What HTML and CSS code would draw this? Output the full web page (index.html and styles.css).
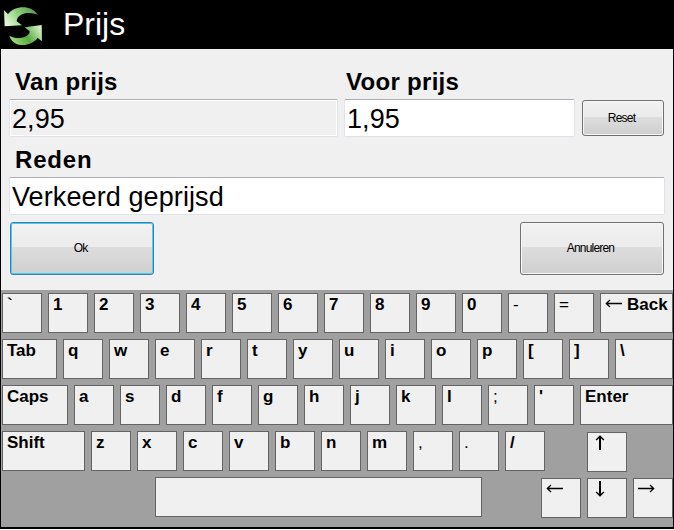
FILE: index.html
```
<!DOCTYPE html>
<html lang="nl">
<head>
    <meta charset="UTF-8">
    <meta name="viewport" content="width=device-width, initial-scale=1.0">
    <title>Prijs</title>
    <link rel="stylesheet" href="styles.css">
</head>
<body>
    <svg class="defs" width="0" height="0">
        <symbol id="arrow-left" viewBox="0 0 17 9">
            <path d="M1 4.5H17M5 1L1.3 4.5L5 8" fill="none" stroke="#000" stroke-width="1.3"/>
        </symbol>
        <symbol id="arrow-right" viewBox="0 0 17 9">
            <path d="M0 4.5H16M12 1L15.7 4.5L12 8" fill="none" stroke="#000" stroke-width="1.3"/>
        </symbol>
        <symbol id="arrow-up" viewBox="0 0 10 16">
            <path d="M5 1V15" fill="none" stroke="#000" stroke-width="2"/>
            <path d="M1.2 5L5 1.2L8.8 5" fill="none" stroke="#000" stroke-width="1.5"/>
        </symbol>
        <symbol id="arrow-down" viewBox="0 0 10 16">
            <path d="M5 0V15" fill="none" stroke="#000" stroke-width="2"/>
            <path d="M1.2 11L5 14.8L8.8 11" fill="none" stroke="#000" stroke-width="1.5"/>
        </symbol>
    </svg>

    <div class="window">
        <header>
            <svg class="logo" viewBox="9 18 120 120">
                <defs>
                    <linearGradient id="greenTop" x1="0" y1="0.6" x2="1" y2="0.2">
                        <stop offset="0" stop-color="#e2f5d8"/>
                        <stop offset="0.45" stop-color="#8fcf7c"/>
                        <stop offset="1" stop-color="#4d9a48"/>
                    </linearGradient>
                    <linearGradient id="greenBottom" x1="0" y1="0.7" x2="1" y2="0.3">
                        <stop offset="0" stop-color="#a4dc80"/>
                        <stop offset="0.5" stop-color="#55ab3c"/>
                        <stop offset="1" stop-color="#d3efc4"/>
                    </linearGradient>
                </defs>
                <path fill="url(#greenTop)" d="M12 31L24 42C38 25 60 19 82 23C97 26 108 34 113 45C99 38 80 37 66 43C56 48 50 55 50 64L66 76L14 79Z"/>
                <path fill="url(#greenBottom)" d="M126 124L113 114C99 131 78 138 57 134C42 131 32 120 28 107C42 115 61 116 74 111C84 107 89 101 89 94L74 82L125 75Z"/>
            </svg>
            <h1>Prijs</h1>
        </header>

        <form class="prijs-form">
            <div class="row">
                <div class="field van">
                    <label for="vanPrijs">Van prijs</label>
                    <input type="text" id="vanPrijs" value="2,95" readonly>
                </div>
                <div class="field voor">
                    <label for="voorPrijs">Voor prijs</label>
                    <input type="text" id="voorPrijs" value="1,95">
                </div>
                <button type="button" class="reset">Reset</button>
            </div>
            <div class="field reden">
                <label for="reden">Reden</label>
                <input type="text" id="reden" value="Verkeerd geprijsd">
            </div>
            <div class="buttons">
                <button type="button" class="ok">Ok</button>
                <button type="button">Annuleren</button>
            </div>
        </form>

        <div class="keyboard">
            <div class="keys">
                <div class="key">`</div>
                <div class="key">1</div>
                <div class="key">2</div>
                <div class="key">3</div>
                <div class="key">4</div>
                <div class="key">5</div>
                <div class="key">6</div>
                <div class="key">7</div>
                <div class="key">8</div>
                <div class="key">9</div>
                <div class="key">0</div>
                <div class="key thin">-</div>
                <div class="key thin">=</div>
                <div class="key wide back"><svg class="horizontal"><use href="#arrow-left"/></svg>Back</div>
            </div>
            <div class="keys">
                <div class="key tab">Tab</div>
                <div class="key">q</div>
                <div class="key">w</div>
                <div class="key">e</div>
                <div class="key">r</div>
                <div class="key">t</div>
                <div class="key">y</div>
                <div class="key">u</div>
                <div class="key">i</div>
                <div class="key">o</div>
                <div class="key">p</div>
                <div class="key">[</div>
                <div class="key">]</div>
                <div class="key wide">\</div>
            </div>
            <div class="keys">
                <div class="key caps">Caps</div>
                <div class="key">a</div>
                <div class="key">s</div>
                <div class="key">d</div>
                <div class="key">f</div>
                <div class="key">g</div>
                <div class="key">h</div>
                <div class="key">j</div>
                <div class="key">k</div>
                <div class="key">l</div>
                <div class="key thin">;</div>
                <div class="key">'</div>
                <div class="key wide">Enter</div>
            </div>
            <div class="keys">
                <div class="key shift">Shift</div>
                <div class="key">z</div>
                <div class="key">x</div>
                <div class="key">c</div>
                <div class="key">v</div>
                <div class="key">b</div>
                <div class="key">n</div>
                <div class="key">m</div>
                <div class="key thin">,</div>
                <div class="key thin">.</div>
                <div class="key">/</div>
                <div class="key arrow up"><svg class="vertical"><use href="#arrow-up"/></svg></div>
            </div>
            <div class="keys last">
                <div class="key space"></div>
                <div class="key arrow left"><svg class="horizontal"><use href="#arrow-left"/></svg></div>
                <div class="key arrow"><svg class="vertical"><use href="#arrow-down"/></svg></div>
                <div class="key arrow"><svg class="horizontal"><use href="#arrow-right"/></svg></div>
            </div>
        </div>
    </div>
</body>
</html>
```
FILE: styles.css
```
* {
    box-sizing: border-box;
}

body {
    font-family: "Liberation Sans", Arial, sans-serif;
    background-color: #ffffff;
    color: #000000;
    margin: 0;
    overflow: hidden;
}

.defs {
    display: block;
}

.window {
    width: 674px;
    height: 529px;
    border: 1px solid #000000;
    border-top: none;
    border-bottom-width: 2px;
    background-color: #f0f0f0;
}

header {
    display: flex;
    height: 49px;
    background-color: #000000;
    color: #ffffff;
}

.logo {
    width: 40px;
    height: 40px;
    margin: 6px 0 0 2px;
}

h1 {
    margin: 6px 0 0 20px;
    font-size: 32px;
    font-weight: normal;
    line-height: 36px;
}

.prijs-form {
    height: 241px;
    padding: 18px 8px 0;
}

.row {
    display: flex;
    align-items: flex-end;
    gap: 6px;
}

.field {
    display: flex;
    flex-direction: column;
}

.van {
    width: 329px;
}

.voor {
    width: 231px;
}

.reden {
    margin-top: 8px;
}

label {
    height: 32px;
    padding-left: 6px;
    font-size: 24px;
    font-weight: bold;
    line-height: 30px;
    letter-spacing: 0.3px;
}

.voor label {
    padding-left: 2px;
}

.reden label {
    letter-spacing: 0.8px;
}

input {
    height: 38px;
    padding: 2px 1px 0 2px;
    border: 1px solid #e2e3ea;
    border-top-color: #abadb3;
    border-radius: 2px;
    font-family: inherit;
    font-size: 27px;
    letter-spacing: 0.1px;
    background-color: #ffffff;
    color: #000000;
}

input[readonly] {
    background-color: #f0f0f0;
    box-shadow: inset 0 0 0 1px #ffffff;
}

button {
    width: 144px;
    height: 53px;
    padding: 0 3px 1px 0;
    border: 1px solid #707070;
    border-radius: 3px;
    background: linear-gradient(#f2f2f2, #ebebeb 48%, #dddddd 48%, #cfcfcf);
    box-shadow: inset 0 0 0 1px #f8f8f8;
    font-family: inherit;
    font-size: 12px;
    letter-spacing: -0.8px;
    color: #000000;
}

.reset {
    width: 82px;
    height: 36px;
    margin: 0 0 1px 1px;
}

.ok {
    border-color: #3c7fb1;
    box-shadow: inset 0 0 0 1px #48cdf4;
}

.buttons {
    display: flex;
    justify-content: space-between;
    margin-top: 7px;
    padding: 0 1px;
}

.keyboard {
    display: flex;
    flex-direction: column;
    gap: 6px;
    height: 237px;
    padding: 3px 0 0 1px;
    background-color: #a0a0a0;
}

.keys {
    display: flex;
    gap: 6px;
}

.key {
    flex: none;
    width: 40px;
    height: 40px;
    padding-left: 4px;
    border: 1px solid #646464;
    background-color: #f0f0f0;
    font-size: 17px;
    font-weight: bold;
    line-height: 21px;
}

.key svg {
    display: block;
}

.thin {
    font-weight: normal;
}

.wide {
    flex: 1;
}

.back {
    display: flex;
    gap: 5px;
}

.tab {
    width: 55px;
}

.caps {
    width: 66px;
}

.shift {
    width: 83px;
}

.space {
    width: 327px;
    margin-left: 153px;
}

.horizontal {
    width: 17px;
    height: 9px;
    margin-top: 5px;
}

.vertical {
    width: 10px;
    height: 16px;
    margin: 2px 0 0 3px;
}

/* the arrow block sits one pixel lower than the other keys */
.arrow {
    margin-top: 1px;
}

.up {
    margin-left: 36px;
}

.last {
    margin-top: -1px;
}

.left {
    margin-left: 53px;
}
```
